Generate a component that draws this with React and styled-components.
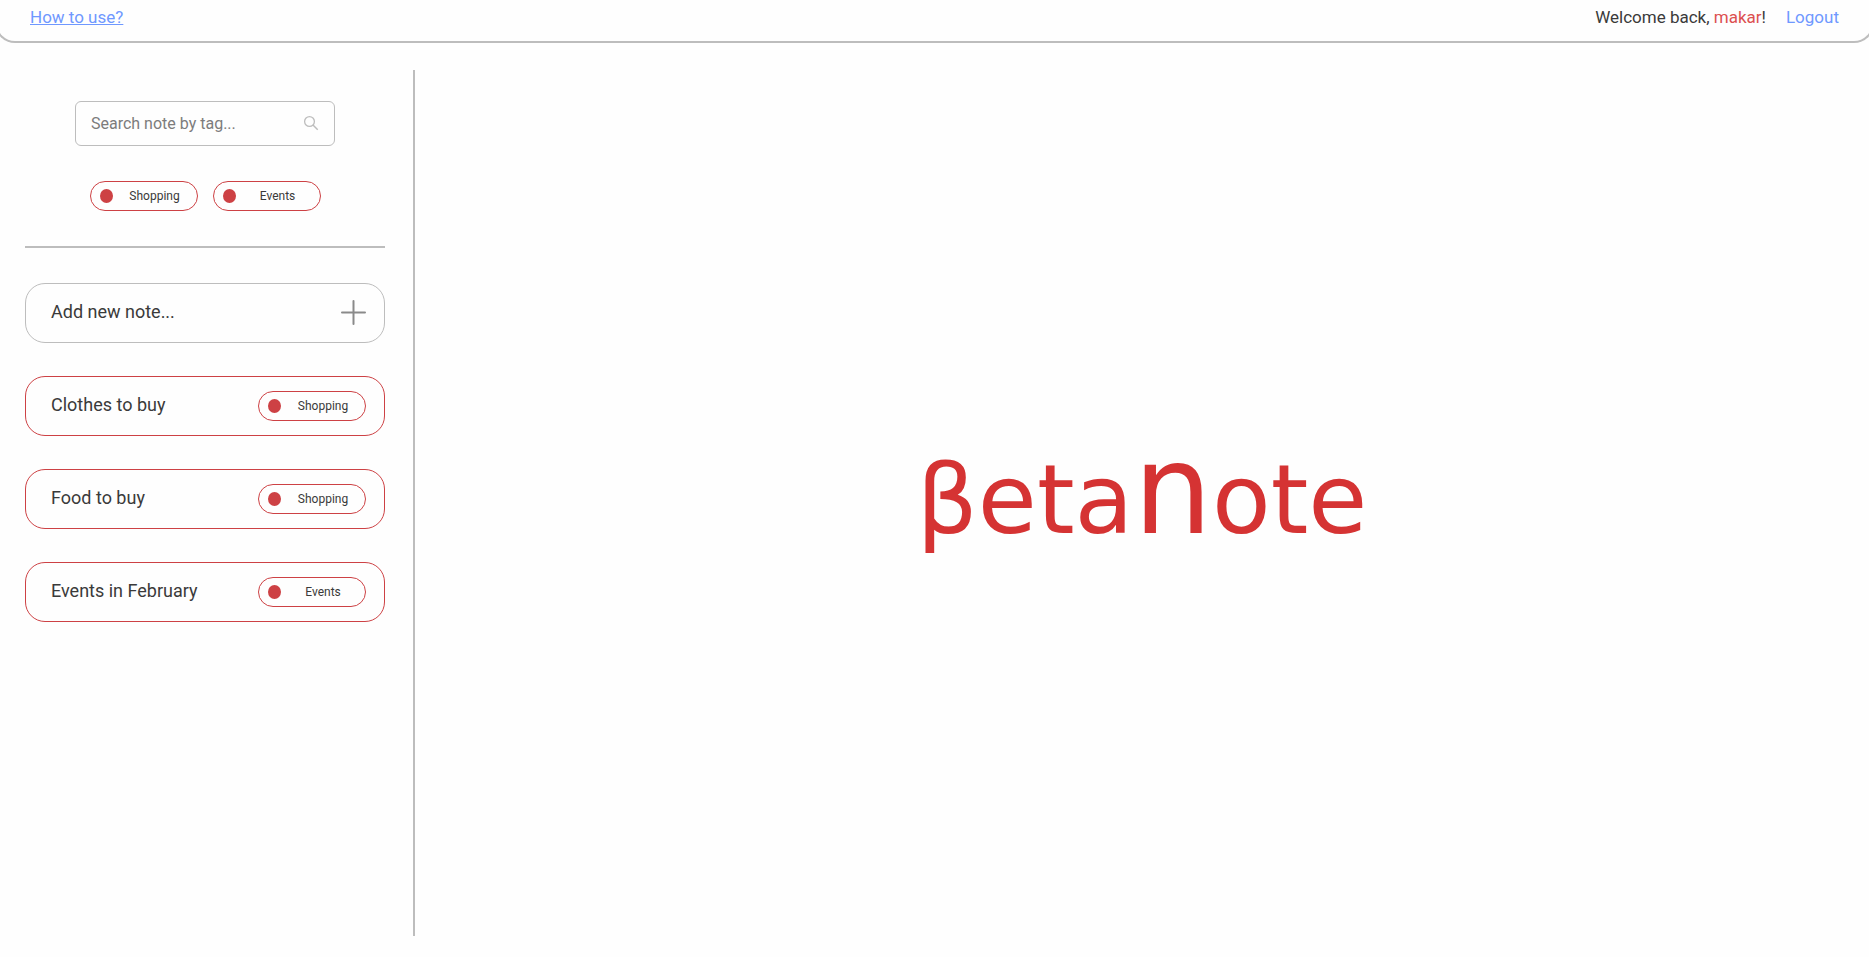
import React from "react";
import styled, { createGlobalStyle } from "styled-components";

const red = "#cd4144";
const grey = "#bdbdbd";
const blue = "#6f98ff";

const GlobalStyle = createGlobalStyle`
  *, *::before, *::after { box-sizing: border-box; }
  body {
    margin: 0;
    background: #fefefe;
    color: #3a3a3a;
    font-family: Roboto, "Liberation Sans", sans-serif;
    font-size: 17px;
  }
  button, input { font: inherit; color: inherit; }
`;

const Page = styled.div`
  display: flex;
  flex-direction: column;
  min-height: 100vh;
  overflow-x: clip;
`;

const Header = styled.header`
  display: flex;
  justify-content: space-between;
  align-items: flex-start;
  height: 43px;
  margin: 0 -5px;
  padding: 7px 33px 0;
  border: 2px solid ${grey};
  border-top: 0;
  border-radius: 0 0 20px 20px;
  line-height: 20px;
`;

const Account = styled.div`
  display: flex;
  gap: 20px;
`;

const Username = styled.span`
  color: #dc5050;
`;

const HelpLink = styled.a`
  color: ${blue};
`;

const LogoutButton = styled.button`
  padding: 0;
  border: 0;
  background: none;
  color: ${blue};
  line-height: 20px;
  cursor: pointer;
`;

const Body = styled.div`
  display: flex;
  flex: 1;
  padding: 27px 0 21px;
`;

const Sidebar = styled.aside`
  flex: 0 0 415px;
  padding: 31px 28px 0 25px;
  border-right: 2px solid ${grey};
`;

const Filters = styled.div`
  display: flex;
  flex-direction: column;
  align-items: center;
  gap: 35px;
  padding-bottom: 35px;
  border-bottom: 2px solid ${grey};
`;

const SearchBox = styled.label`
  display: flex;
  align-items: center;
  width: 260px;
  height: 45px;
  padding: 0 15px;
  border: 1px solid ${grey};
  border-radius: 6px;
`;

const SearchInput = styled.input`
  flex: 1;
  min-width: 0;
  padding: 0;
  border: 0;
  outline: 0;
  background: none;
  font-size: 16px;
  &::placeholder { color: #7c7c7c; opacity: 1; }
`;

const TagRow = styled.div`
  display: flex;
  gap: 15px;
`;

const TagButton = styled.button`
  display: flex;
  align-items: center;
  width: 108px;
  height: 30px;
  padding: 0 9px;
  border: 1px solid ${red};
  border-radius: 15px;
  background: none;
  font-size: 12px;
  cursor: pointer;
`;

const TagDot = styled.span`
  flex: none;
  width: 13px;
  height: 14px;
  border-radius: 50%;
  background: ${red};
`;

const TagName = styled.span`
  flex: 1;
  padding-left: 9px;
  text-align: center;
`;

const NoteList = styled.ul`
  display: flex;
  flex-direction: column;
  gap: 33px;
  margin: 35px 0 0;
  padding: 0;
  list-style: none;
`;

const NoteCard = styled.li`
  display: flex;
  align-items: center;
  justify-content: space-between;
  height: 60px;
  padding: 0 18px 0 25px;
  border: 1px solid ${(p) => p.$color};
  border-radius: 20px;
`;

const NoteTitle = styled.button`
  flex: 1;
  padding: 0 0 2px;
  border: 0;
  background: none;
  font-size: 18px;
  line-height: 22px;
  text-align: left;
  cursor: pointer;
`;

const Main = styled.main`
  flex: 1;
  display: flex;
  align-items: center;
  justify-content: center;
`;

const Wordmark = styled.h1`
  margin: 0;
  padding-bottom: 7px;
  color: #d53333;
  font-family: "DejaVu Sans", sans-serif;
  font-size: 96px;
  font-weight: 400;
  line-height: 110px;
`;

const TallLetter = styled.span`
  font-size: 124px;
  line-height: 1px;
  text-transform: lowercase;
`;

function SearchIcon() {
  return (
    <svg width="16" height="17" viewBox="0 0 16 17" fill="none" stroke={grey} aria-hidden="true">
      <circle cx="6.5" cy="6.5" r="4.9" strokeWidth="1.3" />
      <path d="M10 10l4.7 4.7" strokeWidth="1.5" />
    </svg>
  );
}

function PlusIcon() {
  return (
    <svg width="25" height="26" viewBox="0 0 25 26" stroke="#8a8a8a" strokeWidth="2" strokeLinecap="round" aria-hidden="true">
      <path d="M12.5 1v23M1 12.5h23" />
    </svg>
  );
}

function Tag({ name }) {
  return (
    <TagButton type="button">
      <TagDot />
      <TagName>{name}</TagName>
    </TagButton>
  );
}

const tags = ["Shopping", "Events"];
const notes = [
  { title: "Clothes to buy", tag: "Shopping" },
  { title: "Food to buy", tag: "Shopping" },
  { title: "Events in February", tag: "Events" },
];

export default function App() {
  return (
    <Page>
      <GlobalStyle />
      <Header>
        <HelpLink href="#help">How to use?</HelpLink>
        <Account>
          <span>Welcome back, <Username>makar</Username>!</span>
          <LogoutButton type="button">Logout</LogoutButton>
        </Account>
      </Header>
      <Body>
        <Sidebar>
          <Filters>
            <SearchBox>
              <SearchInput type="text" aria-label="Search note by tag" placeholder="Search note by tag..." />
              <SearchIcon />
            </SearchBox>
            <TagRow>
              {tags.map((name) => <Tag key={name} name={name} />)}
            </TagRow>
          </Filters>
          <NoteList>
            <NoteCard $color={grey}>
              <NoteTitle type="button">Add new note...</NoteTitle>
              <PlusIcon />
            </NoteCard>
            {notes.map((note) => (
              <NoteCard key={note.title} $color={red}>
                <NoteTitle type="button">{note.title}</NoteTitle>
                <Tag name={note.tag} />
              </NoteCard>
            ))}
          </NoteList>
        </Sidebar>
        <Main>
          <Wordmark>βeta<TallLetter>N</TallLetter>ote</Wordmark>
        </Main>
      </Body>
    </Page>
  );
}
